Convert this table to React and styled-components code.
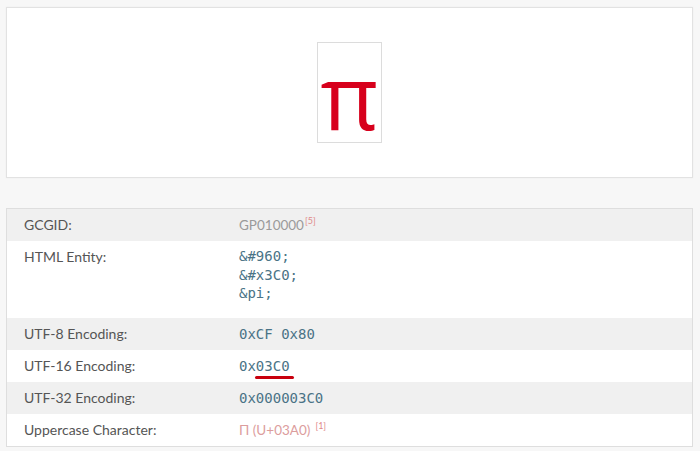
import styled, { createGlobalStyle } from 'styled-components';

const GlobalStyle = createGlobalStyle`
  html, body {
    margin: 0;
    padding: 0;
    background: #f7f7f7;
  }
  body {
    font-family: Lato, "Noto Sans", sans-serif;
  }
`;

const Page = styled.div`
  display: flex;
  flex-direction: column;
  gap: 30px;
  padding: 7px 7px 0 6px;
`;

const PreviewCard = styled.div`
  height: 169px;
  background: #fff;
  border: 1px solid #e2e2e2;
  box-shadow: 0 0 2px rgba(0, 0, 0, 0.04);
  display: flex;
  align-items: center;
  justify-content: center;
`;

const GlyphBox = styled.div`
  width: 63px;
  height: 99px;
  border: 1px solid #dcdcdc;
  display: flex;
  justify-content: center;
  align-items: flex-end;
  font-family: "Open Sans", sans-serif;
  font-size: 89px;
  line-height: 1;
  color: #d7001c;
`;

const Glyph = styled.span`
  display: block;
  margin-bottom: 2px;
`;

const Table = styled.div`
  background: #fff;
  border: 1px solid #dedede;
`;

const Row = styled.div`
  display: grid;
  grid-template-columns: 232px 1fr;
  padding: ${p => (p.$tall ? '6px 0 15px' : '6px 0')};
  background: ${p => (p.$shade ? '#f0f0f0' : '#fff')};
  line-height: 20px;
`;

const Label = styled.div`
  padding-left: 17px;
  font-size: 14px;
  color: #555;
`;

const Mono = styled.div`
  font-family: "DejaVu Sans Mono", "Liberation Mono", monospace;
  font-size: 14px;
  color: #4a7386;
  line-height: ${p => (p.$lines ? '18.5px' : '20px')};
`;

const Marked = styled.span`
  position: relative;

  &::after {
    content: '';
    position: absolute;
    left: -1px;
    right: -4px;
    bottom: -5px;
    height: 3px;
    border-radius: 2px;
    background: #c8000e;
  }
`;

const Plain = styled.div`
  font-size: 13.5px;
  color: ${p => p.$color || '#9a9a9a'};
`;

const Ref = styled.sup`
  font-size: 9px;
  color: #e08a8a;
  margin-left: ${p => p.$gap || '1px'};
  vertical-align: 6px;
  line-height: 0;
`;

export default function App() {
  return (
    <>
      <GlobalStyle />
      <Page>
        <PreviewCard>
          <GlyphBox>
            <Glyph>π</Glyph>
          </GlyphBox>
        </PreviewCard>
        <Table>
          <Row $shade>
            <Label>GCGID:</Label>
            <Plain>
              GP010000<Ref>[5]</Ref>
            </Plain>
          </Row>
          <Row $tall>
            <Label>HTML Entity:</Label>
            <Mono $lines>
              &amp;#960;
              <br />
              &amp;#x3C0;
              <br />
              &amp;pi;
            </Mono>
          </Row>
          <Row $shade>
            <Label>UTF-8 Encoding:</Label>
            <Mono>0xCF 0x80</Mono>
          </Row>
          <Row>
            <Label>UTF-16 Encoding:</Label>
            <Mono>
              0x<Marked>03C0</Marked>
            </Mono>
          </Row>
          <Row $shade>
            <Label>UTF-32 Encoding:</Label>
            <Mono>0x000003C0</Mono>
          </Row>
          <Row>
            <Label>Uppercase Character:</Label>
            <Plain $color="#dc9d9d">
              Π (U+03A0)<Ref $gap="5px">[1]</Ref>
            </Plain>
          </Row>
        </Table>
      </Page>
    </>
  );
}
